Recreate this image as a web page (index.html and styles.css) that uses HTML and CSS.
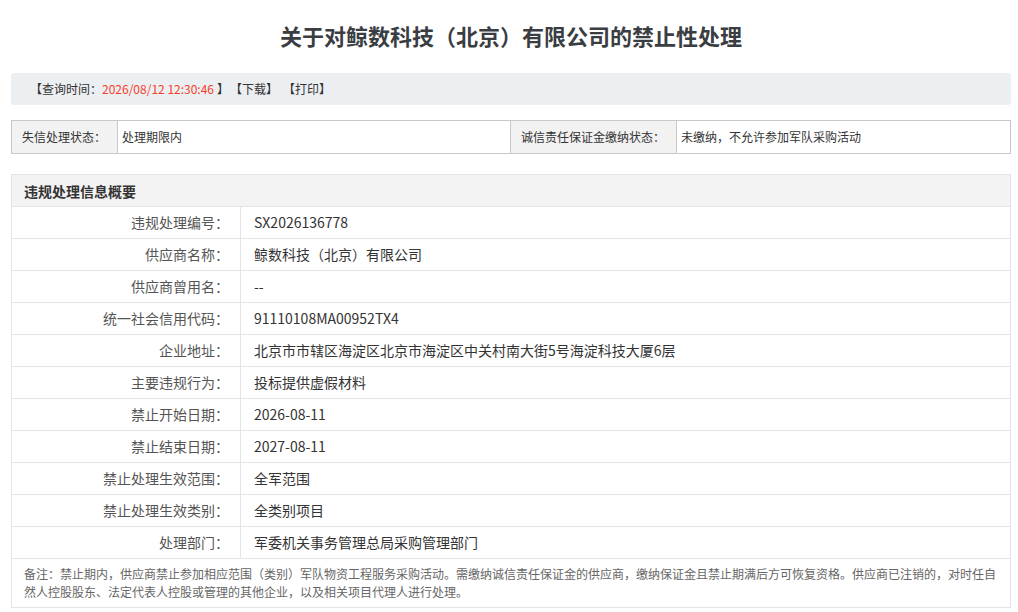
FILE: index.html
```html
<!DOCTYPE html>
<html lang="zh-CN">
<head>
<meta charset="utf-8">
<title>关于对鲸数科技（北京）有限公司的禁止性处理</title>
<link rel="stylesheet" href="styles.css">
</head>
<body>
<div class="page">
  <h1 class="title">关于对鲸数科技（北京）有限公司的禁止性处理</h1>

  <div class="toolbar">
    <span>【查询时间：</span><span class="time">2026/08/12 12:30:46</span><span class="close">】</span>
    <span class="act">【下载】</span>
    <span class="act">【打印】</span>
  </div>

  <div class="status">
    <div class="s-label s-l1">失信处理状态：</div>
    <div class="s-value s-v1">处理期限内</div>
    <div class="s-label s-l2">诚信责任保证金缴纳状态：</div>
    <div class="s-value s-v2">未缴纳，不允许参加军队采购活动</div>
  </div>

  <div class="info">
    <div class="info-head">违规处理信息概要</div>
    <div class="row"><div class="lbl">违规处理编号：</div><div class="val">SX2026136778</div></div>
    <div class="row"><div class="lbl">供应商名称：</div><div class="val">鲸数科技（北京）有限公司</div></div>
    <div class="row"><div class="lbl">供应商曾用名：</div><div class="val">--</div></div>
    <div class="row"><div class="lbl">统一社会信用代码：</div><div class="val">91110108MA00952TX4</div></div>
    <div class="row"><div class="lbl">企业地址：</div><div class="val">北京市市辖区海淀区北京市海淀区中关村南大街5号海淀科技大厦6层</div></div>
    <div class="row"><div class="lbl">主要违规行为：</div><div class="val">投标提供虚假材料</div></div>
    <div class="row"><div class="lbl">禁止开始日期：</div><div class="val">2026-08-11</div></div>
    <div class="row"><div class="lbl">禁止结束日期：</div><div class="val">2027-08-11</div></div>
    <div class="row"><div class="lbl">禁止处理生效范围：</div><div class="val">全军范围</div></div>
    <div class="row"><div class="lbl">禁止处理生效类别：</div><div class="val">全类别项目</div></div>
    <div class="row"><div class="lbl">处理部门：</div><div class="val">军委机关事务管理总局采购管理部门</div></div>
    <div class="note">备注：禁止期内，供应商禁止参加相应范围（类别）军队物资工程服务采购活动。需缴纳诚信责任保证金的供应商，缴纳保证金且禁止期满后方可恢复资格。供应商已注销的，对时任自然人控股股东、法定代表人控股或管理的其他企业，以及相关项目代理人进行处理。</div>
  </div>
</div>
</body>
</html>
```

FILE: styles.css
```css
* { box-sizing: border-box; }
html, body {
  margin: 0;
  padding: 0;
  background: #fff;
}
body {
  font-family: "Noto Sans CJK SC", "Noto Sans", sans-serif;
  color: #333;
}
.page {
  width: 1000px;
  margin-left: 11px;
}
.title {
  margin: 0;
  height: 73px;
  padding-top: 19px;
  text-align: center;
  font-size: 22px;
  font-weight: bold;
  line-height: 32px;
  color: #3a3d42;
}
.toolbar {
  height: 32px;
  background: #eceff2;
  border-radius: 3px;
  padding-left: 19px;
  font-size: 12px;
  line-height: 32px;
  color: #333;
  display: flex;
  align-items: center;
}
.toolbar .time {
  color: #f5402a;
}
.toolbar .close {
  margin-left: 3px;
}
.toolbar .act {
  margin-left: 1px;
}
.toolbar .act + .act {
  margin-left: 5px;
}
.status {
  margin-top: 15px;
  display: grid;
  grid-template-columns: 105px 394px 165px 1fr;
  border: 1px solid #c9c9c9;
  height: 34px;
  font-size: 12px;
}
.s-label, .s-value {
  line-height: 32px;
  white-space: nowrap;
}
.s-label {
  background: #f2f2f2;
  padding-left: 10px;
  color: #333;
}
.s-value {
  padding-left: 4px;
  background: #fff;
}
.s-v1 { border-left: 1px solid #c9c9c9; border-right: 1px solid #c9c9c9; }
.s-v2 { border-left: 1px solid #c9c9c9; }
.info {
  margin-top: 20px;
  border: 1px solid #e4e4e4;
}
.info-head {
  height: 32px;
  background: #f3f3f3;
  padding-left: 12px;
  font-size: 14px;
  font-weight: bold;
  line-height: 32px;
  color: #333;
  border-bottom: 1px solid #e4e4e4;
}
.row {
  display: grid;
  grid-template-columns: 229px 1fr;
  height: 32px;
  border-bottom: 1px solid #e4e4e4;
  font-size: 14px;
  line-height: 31px;
}
.lbl {
  text-align: right;
  padding-right: 11px;
  color: #555;
  border-right: 1px solid #e4e4e4;
}
.val {
  padding-left: 13px;
  color: #333;
}
.note {
  padding: 6px 10px 6px 12px;
  font-size: 12px;
  line-height: 18px;
  color: #666;
}
```
